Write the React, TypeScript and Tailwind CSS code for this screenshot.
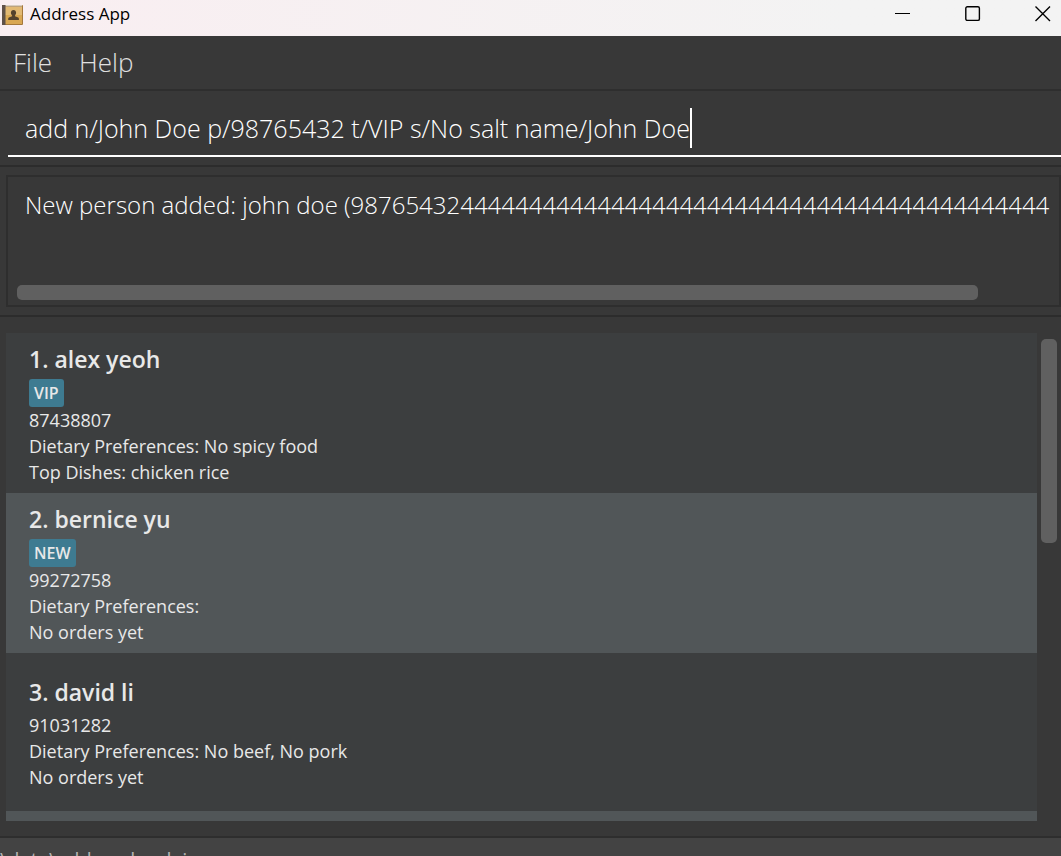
import { useState } from "react";

type Person = {
  name: string;
  tag?: string;
  phone: string;
  diet: string;
  orders: string;
};

const people: Person[] = [
  { name: "alex yeoh", tag: "VIP", phone: "87438807", diet: "No spicy food", orders: "Top Dishes: chicken rice" },
  { name: "bernice yu", tag: "NEW", phone: "99272758", diet: "", orders: "No orders yet" },
  { name: "david li", phone: "91031282", diet: "No beef, No pork", orders: "No orders yet" },
];

const resultText = "New person added: john doe (98765432" + "4".repeat(43);

function BookIcon() {
  return (
    <svg width="24" height="24" viewBox="0 0 24 24" aria-hidden="true">
      <rect x="2" y="3" width="21" height="20" rx="1" fill="#a5783a" />
      <rect x="5" y="5" width="17" height="17" fill="#d9a752" />
      <rect x="5" y="5" width="17" height="8" fill="#e2b973" />
      <rect x="4" y="3" width="18" height="1.5" fill="#d8cdbf" />
      <rect x="2" y="3" width="3.5" height="20" fill="#5f5148" />
      <path d="M13.500 8c1.700 0 2.600 1.200 2.600 2.800 0 1.100-.5 2-1.100 2.600v.9l3.200 1.200c.5.200.7.700.7 1.500v1H8.200v-1c0-.8.200-1.300.7-1.500l3.200-1.200v-.9c-.7-.6-1.200-1.500-1.200-2.600C10.900 9.200 11.800 8 13.500 8z" fill="#54422c" />
    </svg>
  );
}

function TitleBar() {
  return (
    <header className="flex h-9 shrink-0 items-center justify-between bg-linear-to-r from-[#f9eef1] to-[#f3f3f3] to-80% text-black">
      <div className="flex items-center gap-1.5 pb-2">
        <BookIcon />
        <h1 className="text-[17px] leading-6">Address App</h1>
      </div>
      <div className="flex items-center gap-[54px] pr-2.5 pb-2">
        <button type="button" aria-label="Minimize">
          <svg width="16" height="16" viewBox="0 0 16 16" fill="none" stroke="currentColor"><path d="M0 7.500h15" /></svg>
        </button>
        <button type="button" aria-label="Maximize">
          <svg width="16" height="16" viewBox="0 0 16 16" fill="none" stroke="currentColor" strokeWidth="1.400"><rect x=".8" y=".8" width="13.600" height="13.600" rx="1.500" /></svg>
        </button>
        <button type="button" aria-label="Close">
          <svg width="16" height="16" viewBox="0 0 16 16" fill="none" stroke="currentColor" strokeWidth="1.400"><path d="M.5.5l14.500 14.500M15 .5L.5 15" /></svg>
        </button>
      </div>
    </header>
  );
}

function PersonCard({ person, index }: { person: Person; index: number }) {
  return (
    <li className="flex min-h-[158px] shrink-0 flex-col justify-center px-[23px] py-2 odd:bg-[#3c3e3f] even:bg-[#515658]">
      <h2 className="mb-0.5 text-[23px] leading-9 font-semibold">
        {index}. {person.name}
      </h2>
      {person.tag && (
        <span className="self-start rounded-[3px] bg-[#3e7b91] px-[5px] text-[16px] leading-7 font-semibold">{person.tag}</span>
      )}
      <p>{person.phone}</p>
      <p>Dietary Preferences: {person.diet}</p>
      <p>{person.orders}</p>
    </li>
  );
}

export default function App() {
  const [command, setCommand] = useState("add n/John Doe p/98765432 t/VIP s/No salt name/John Doe");

  return (
    <div className="flex h-screen flex-col overflow-hidden bg-[#383838] font-['Open_Sans','Noto_Sans',sans-serif] text-[#e8e8e8]">
      <TitleBar />
      <nav className="flex h-[55px] shrink-0 items-center gap-[27px] border-b-2 border-[#2e2e2e] px-[13px] text-[26px] font-light text-[#e0e0e0]">
        <button type="button">File</button>
        <button type="button">Help</button>
      </nav>

      <div className="shrink-0 border-b-2 border-[#2c2c2c] pt-2.5 pb-2 pl-2">
        <label className="flex h-14 items-center border-b-2 border-white pl-[17px]">
          <input
            aria-label="Command"
            value={command}
            onChange={(e) => setCommand(e.target.value)}
            className="field-sizing-content bg-transparent text-[25px] leading-9 font-light text-white outline-none"
          />
          <span className="h-10 w-0.5 bg-white" />
        </label>
      </div>

      <section className="shrink-0 border-b-2 border-[#2c2c2c] pt-2 pb-2 pl-1.5">
        <div className="flex h-[132px] flex-col justify-between border-2 border-[#2e2e2e] pt-2.5 pr-px pb-[5px]">
          <textarea
            aria-label="Result"
            readOnly
            wrap="off"
            rows={1}
            value={resultText}
            className="h-9 resize-none overflow-hidden pl-[17px] text-[24px] leading-9 font-light text-white outline-none"
          />
          <div className="pr-20 pl-[9px]">
            <div className="h-[15px] rounded-[5px] bg-[#606060]" />
          </div>
        </div>
      </section>

      <main className="flex min-h-0 flex-1 gap-1 pt-4 pr-1 pb-[15px] pl-1.5">
        <ul className="flex min-w-0 flex-1 flex-col overflow-hidden text-[18px] leading-[26px]">
          {people.map((person, i) => (
            <PersonCard key={person.phone} person={person} index={i + 1} />
          ))}
          <li className="h-40 shrink-0 bg-[#515658]" />
        </ul>
        <div className="w-4 pt-1.5">
          <div className="h-[204px] rounded-[5px] bg-[#606060]" />
        </div>
      </main>

      <footer className="h-5 shrink-0 overflow-hidden border-t-2 border-[#2e2e2e] bg-[#434343]">
        <p className="pt-2.5 text-[20px] leading-6 text-[#b4b4b4]">\data\addressbook.json</p>
      </footer>
    </div>
  );
}
